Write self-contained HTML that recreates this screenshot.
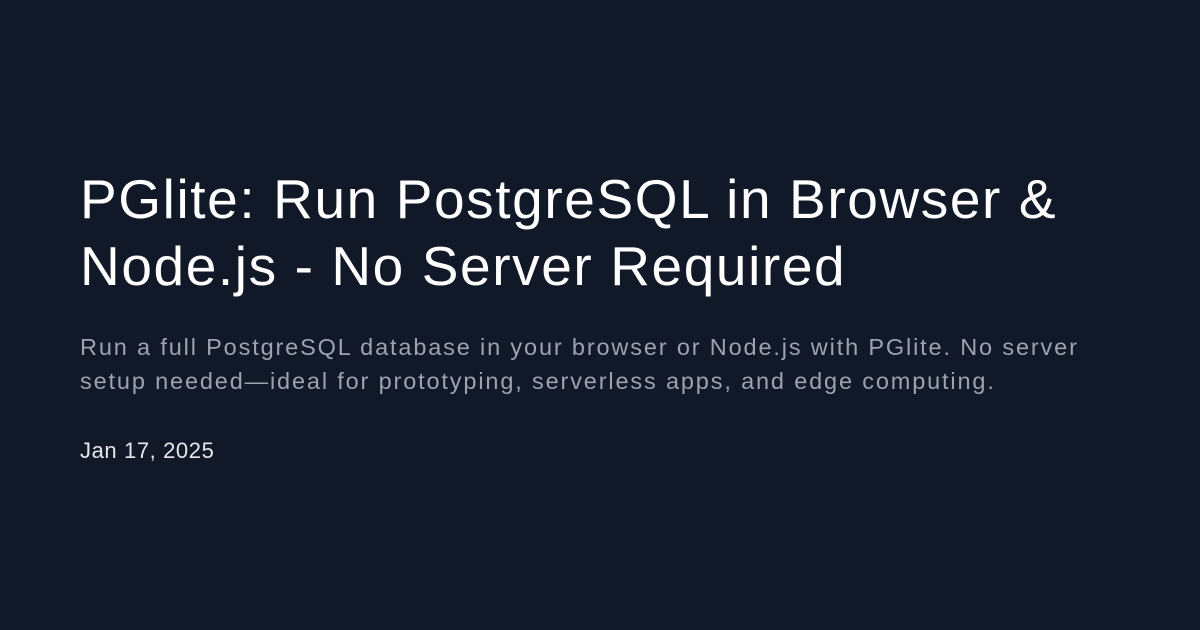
<!DOCTYPE html>
<html><head><meta charset="utf-8"><style>
html,body{margin:0;padding:0;}
body{width:1200px;height:630px;background:#111827;font-family:"Liberation Sans",sans-serif;position:relative;overflow:hidden;}
h1{position:absolute;left:80px;top:166px;margin:0;width:1100px;font-size:55px;font-weight:400;line-height:67px;color:#ffffff;letter-spacing:1.6px;white-space:nowrap;}
p{position:absolute;left:80px;top:330px;margin:0;width:1100px;font-size:23.5px;line-height:34px;color:#9ca3af;letter-spacing:1.85px;white-space:nowrap;}
.d{position:absolute;left:80px;top:438px;font-size:22px;color:#e5e7eb;letter-spacing:0.6px;}
</style></head><body>
<h1>PGlite: Run PostgreSQL in Browser &amp;<br>Node.js - No Server Required</h1>
<p>Run a full PostgreSQL database in your browser or Node.js with PGlite. No server<br>setup needed—ideal for prototyping, serverless apps, and edge computing.</p>
<div class="d">Jan 17, 2025</div>
</body></html>
